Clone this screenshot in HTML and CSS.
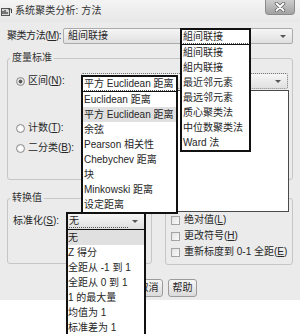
FILE: index.html
```html
<!DOCTYPE html>
<html lang="zh">
<head>
<meta charset="utf-8">
<title>系统聚类分析: 方法</title>
<link rel="stylesheet" href="styles.css">
</head>
<body>
<div class="dialog">
  <div class="titlebar">
    <svg class="app-icon" width="11" height="10" viewBox="0 0 11 10">
      <rect x="0.5" y="1.5" width="8" height="7" fill="#d8d8d8" stroke="#555"/>
      <path d="M2 7V4M4 7V3M6 7V5" stroke="#333" stroke-width="1.2"/>
      <path d="M7 2h3.5v4" fill="none" stroke="#444"/>
    </svg>
    <span class="title">系统聚类分析: 方法</span>
    <div class="close">
      <svg width="12" height="10" viewBox="0 0 12 10">
        <path d="M2.5 1.5l7 7M9.5 1.5l-7 7" stroke="#666" stroke-width="3.4" stroke-linecap="round"/>
        <path d="M2.5 1.5l7 7M9.5 1.5l-7 7" stroke="#fff" stroke-width="1.8" stroke-linecap="round"/>
      </svg>
    </div>
  </div>

  <div class="method-row">
    <span class="method-label">聚类方法(<u>M</u>):</span>
    <div class="combo"><span class="val">組间联接</span><span class="arrow"></span></div>
  </div>

  <div class="group measures">
    <div class="group-title">度量标准</div>
    <div class="radio-row first">
      <div class="radio-cell"><span class="radio on"></span><span>区间(<u>N</u>):</span></div>
      <div class="combo focus"><span class="val"></span><span class="arrow"></span></div>
    </div>
    <div class="radio-row count">
      <div class="radio-cell"><span class="radio"></span><span>计数(<u>T</u>):</span></div>
    </div>
    <div class="radio-row binary">
      <div class="radio-cell"><span class="radio"></span><span>二分类(<u>B</u>):</span></div>
    </div>
  </div>

  <div class="lower">
    <div class="group transform">
      <div class="group-title">转换值</div>
      <div class="std-row">
        <span class="std-label">标准化(<u>S</u>):</span>
        <div class="combo"><span class="val"></span><span class="arrow"></span></div>
      </div>
    </div>
    <div class="group transform-measures">
      <div class="group-title">转换测量</div>
      <div class="check-row first"><span class="check"></span><span>绝对值(<u>L</u>)</span></div>
      <div class="check-row"><span class="check"></span><span>更改符号(<u>H</u>)</span></div>
      <div class="check-row"><span class="check"></span><span>重新标度到 0-1 全距(<u>E</u>)</span></div>
    </div>
  </div>

  <div class="buttons">
    <div class="btn">继续</div>
    <div class="btn">取消</div>
    <div class="btn">帮助</div>
  </div>
</div>

<!-- open drop-down lists drawn over the dialog -->
<div class="wide-list"></div>

<div class="dropdown cluster-list">
  <div class="dd-head"><span class="val">組间联接</span></div>
  <div class="dd-item">組间联接</div>
  <div class="dd-item">組内联接</div>
  <div class="dd-item">最近邻元素</div>
  <div class="dd-item">最远邻元素</div>
  <div class="dd-item">质心聚类法</div>
  <div class="dd-item">中位数聚类法</div>
  <div class="dd-item">Ward 法</div>
</div>

<div class="dropdown measure-list">
  <div class="dd-head"><span class="val">平方 Euclidean 距离</span></div>
  <div class="dd-item">Euclidean 距离</div>
  <div class="dd-item sel">平方 Euclidean 距离</div>
  <div class="dd-item">余弦</div>
  <div class="dd-item">Pearson 相关性</div>
  <div class="dd-item">Chebychev 距离</div>
  <div class="dd-item">块</div>
  <div class="dd-item">Minkowski 距离</div>
  <div class="dd-item">设定距离</div>
</div>

<div class="dropdown std-list">
  <div class="dd-head shaded"><span class="val">无</span><span class="arrow"></span></div>
  <div class="dd-item sel">无</div>
  <div class="dd-item">Z 得分</div>
  <div class="dd-item">全距从 -1 到 1</div>
  <div class="dd-item">全距从 0 到 1</div>
  <div class="dd-item">1 的最大量</div>
  <div class="dd-item">均值为 1</div>
  <div class="dd-item">标准差为 1</div>
</div>
</body>
</html>
```
FILE: styles.css
```css
html, body {
  margin: 0;
  padding: 0;
}
body {
  width: 300px;
  height: 334px;
  overflow: hidden;
  position: relative;
  background: #ffffff;
  font-family: "Liberation Sans", "Noto Sans CJK SC", sans-serif;
  font-size: 10px;
  line-height: 12px;
  color: #262626;
}
u {
  text-decoration: underline;
  text-underline-offset: 1px;
}

.dialog {
  height: 300px;
  background: #ebebeb;
}

/* title bar */
.titlebar {
  display: flex;
  align-items: center;
  height: 22px;
  background: linear-gradient(#f4f4f4, #e7e7e7);
}
.app-icon {
  margin: 1px 3px 0 1px;
}
.title {
  color: #333;
  letter-spacing: 0.1px;
}
.close {
  margin-left: auto;
  margin-right: 5px;
  align-self: flex-start;
  width: 30px;
  height: 15px;
  box-sizing: border-box;
  border: 1px solid #8c8c8c;
  border-top: none;
  border-radius: 0 0 4px 4px;
  background: linear-gradient(#cdcdcd, #a2a2a2);
  display: flex;
  align-items: center;
  justify-content: center;
}

/* combo boxes */
.combo {
  flex: 1;
  height: 16px;
  box-sizing: border-box;
  border: 1px solid #ababab;
  border-radius: 2px;
  background: linear-gradient(#f6f6f6, #e0e0e0);
  display: flex;
  align-items: center;
  padding: 0 6px 0 4px;
  white-space: nowrap;
  overflow: hidden;
}
.combo.focus {
  border: 1px dotted #777;
}
.combo .val {
  flex: 1;
}
.arrow {
  width: 0;
  height: 0;
  border-left: 3px solid transparent;
  border-right: 3px solid transparent;
  border-top: 3px solid #555;
}

.method-row {
  display: flex;
  align-items: center;
  height: 16px;
  margin: 6px 7px 0;
}
.method-label {
  width: 56px;
  white-space: nowrap;
  letter-spacing: -0.45px;
}

/* group boxes */
.group {
  border: 1px solid #c6c6c6;
  border-radius: 3px;
  box-sizing: border-box;
}
.group-title {
  width: max-content;
  height: 12px;
  margin: -7px 0 0 2px;
  padding: 0 2px;
  background: #ebebeb;
  color: #333;
}
.measures {
  margin: 14px 7px 0;
  height: 122px;
}
.radio-row {
  display: flex;
  align-items: center;
  height: 16px;
  padding: 0 4px 0 8px;
}
.radio-row.first { margin-top: 9px; }
.radio-row.count { margin-top: 31px; }
.radio-row.binary { margin-top: 4px; }
.radio-cell {
  width: 65px;
  display: flex;
  align-items: center;
  gap: 3px;
  white-space: nowrap;
}
.radio {
  width: 9px;
  height: 9px;
  box-sizing: border-box;
  border: 1px solid #8e8e8e;
  border-radius: 50%;
  background: radial-gradient(circle, #ffffff 30%, #dcdcdc 100%);
}
.radio.on {
  background: radial-gradient(circle, #5a5a5a 0 35%, #e6e6e6 45%, #cfcfcf 100%);
}

.lower {
  display: flex;
  gap: 13px;
  margin: 18px 7px 0;
}
.transform {
  width: 145px;
  height: 66px;
}
.transform-measures {
  flex: 1;
  height: 67px;
}
.std-row {
  display: flex;
  align-items: center;
  height: 17px;
  margin-top: 8px;
  padding: 0 5px 0 5px;
}
.std-label {
  width: 53px;
  white-space: nowrap;
}
.check-row {
  display: flex;
  align-items: center;
  height: 16px;
  padding-left: 5px;
  white-space: nowrap;
}
.check-row.first { margin-top: 8px; }
.check {
  width: 9px;
  height: 9px;
  box-sizing: border-box;
  border: 1px solid #a3a3a3;
  background: linear-gradient(135deg, #e2e2e2, #fafafa);
  margin-right: 4px;
}

/* buttons */
.buttons {
  display: flex;
  justify-content: center;
  gap: 5px;
  margin-top: 14px;
  padding-right: 3px;
}
.btn {
  width: 29px;
  height: 18px;
  box-sizing: border-box;
  border: 1px solid #9b9b9b;
  border-radius: 3px;
  background: linear-gradient(#f7f7f7, #dadada);
  display: flex;
  align-items: center;
  justify-content: center;
}

/* open lists (overlays) */
.wide-list {
  position: absolute;
  left: 82px;
  top: 90px;
  width: 207px;
  height: 122px;
  box-sizing: border-box;
  border: 1px solid #4a4a4a;
  background: #ffffff;
}
.dropdown {
  position: absolute;
  box-sizing: border-box;
  border: 2px solid #111;
  background: #ffffff;
}
.dd-head {
  height: 14px;
  display: flex;
  align-items: center;
  padding: 0 1px;
  border-bottom: 1px solid #111;
  white-space: nowrap;
}
.dd-head .val {
  flex: 1;
  line-height: 12px;
  border-bottom: 1px dotted #555;
}
.dd-head.shaded {
  height: 15px;
  background: linear-gradient(#f6f6f6, #dedede);
  padding-right: 6px;
}
.dd-head.shaded .arrow {
  margin-left: 4px;
}
.dd-item {
  height: 15px;
  line-height: 15px;
  padding-left: 1px;
  white-space: nowrap;
  overflow: hidden;
}
.dd-item.sel {
  background: #e0e0e0;
}
.cluster-list {
  left: 180px;
  top: 28px;
  width: 71px;
}
.measure-list {
  left: 81px;
  top: 75px;
  width: 97px;
}
.std-list {
  left: 66px;
  top: 212px;
  width: 80px;
}
.std-list .dd-item {
  padding-left: 0;
}
```
